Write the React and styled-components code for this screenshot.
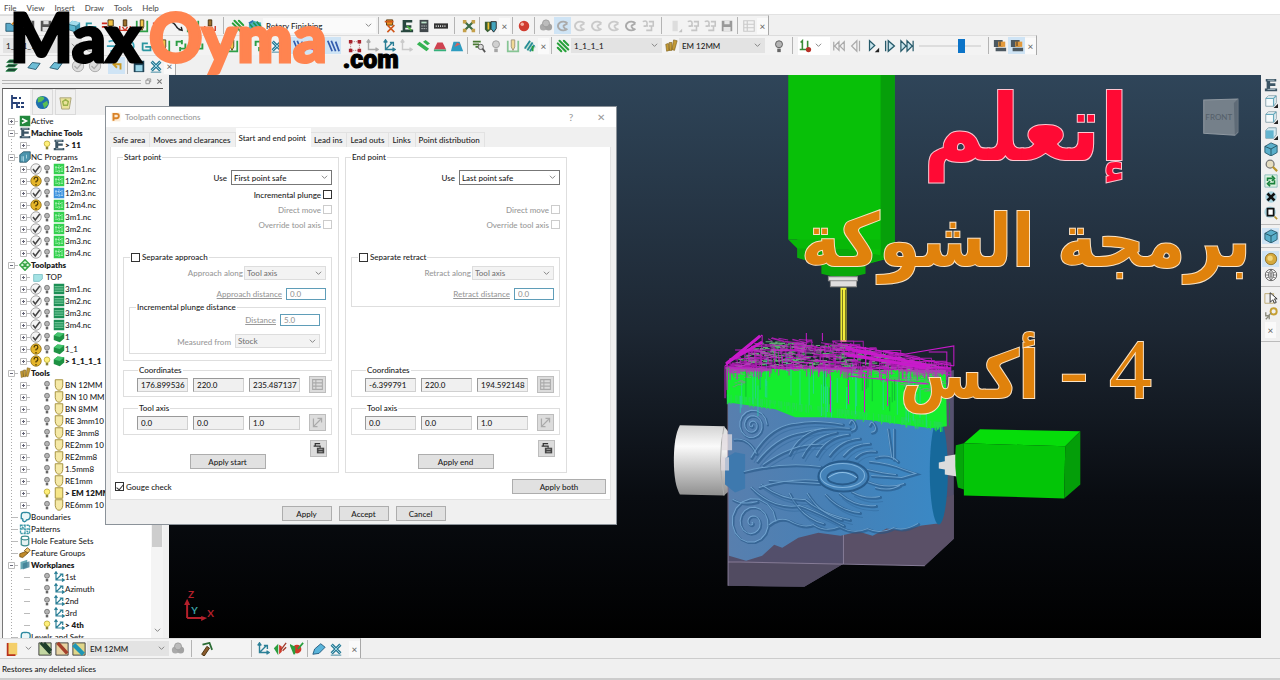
import React, { useState } from "react";
import styled, { createGlobalStyle } from "styled-components";

const GlobalStyle = createGlobalStyle`
  * {
    box-sizing: border-box;
  }
  body {
    margin: 0;
    background: #f0f0f0;
    color: #1c1c1c;
    font-family: Lato, "Open Sans", sans-serif;
    font-size: 8px;
    font-weight: 500;
    line-height: 12px;
  }
  button,
  input,
  select {
    font: inherit;
    color: inherit;
    margin: 0;
    padding: 0;
    border-radius: 0;
  }
`;

const Shell = styled.div`
  position: relative;
  display: flex;
  flex-direction: column;
  height: 100vh;
  overflow: hidden;
`;

const MenuBar = styled.nav`
  display: flex;
  gap: 10px;
  height: 15px;
  padding: 2px 4px;
  background: #fff;
  border-bottom: 1px solid #e2e2e2;
  color: #555;
`;

const MenuLink = styled.a`
  color: inherit;
  text-decoration: none;
`;

const ToolRow = styled.div`
  display: flex;
  height: 20px;
`;

const ToolBar = styled.div`
  display: flex;
  align-items: center;
  padding-left: 3px;
  border-top: 1px solid #dcdcdc;
  border-right: 1px solid #a8a8a8;
  background: #f3f3f3;
`;

const ToolButton = styled.button`
  display: flex;
  align-items: center;
  justify-content: center;
  flex: none;
  width: 17px;
  height: 17px;
  border: none;
  background: ${(p) => (p.$active ? "#cfe4f5" : "transparent")};
  opacity: ${(p) => (p.$faded ? 0.55 : 1)};
`;

const CloseButton = styled.button`
  flex: none;
  width: 11px;
  height: 16px;
  border: none;
  background: #fafafa;
  color: #666;
  font-size: 10px;
  line-height: 12px;
`;

const Divider = styled.span`
  flex: none;
  width: 1px;
  height: 17px;
  margin: 0 ${(p) => (p.$wide ? 5 : 2)}px;
  background: #b4b4b4;
`;

const Space = styled.span`
  flex: none;
  width: 5px;
`;

const ComboBox = styled.span`
  display: grid;
  grid-template-columns: 1fr 14px;
  align-items: center;
  flex: none;
  width: ${(p) => p.$width || 84}px;
  height: ${(p) => p.$height || 15}px;
  background: ${(p) => p.$fill || "#e3e3e3"};
  border: 1px solid ${(p) => p.$line || "transparent"};
  color: ${(p) => (p.$muted ? "#777" : "#222")};

  select {
    grid-area: 1 / 1 / 2 / 3;
    width: 100%;
    height: 100%;
    padding-left: 2px;
    appearance: none;
    border: none;
    background: transparent;
    opacity: 1;
    color: inherit;
    outline: none;
  }
  svg {
    grid-area: 1 / 2 / 2 / 3;
    justify-self: center;
    pointer-events: none;
  }
`;

const Main = styled.main`
  display: flex;
  flex: 1;
  min-height: 0;
`;

const Explorer = styled.aside`
  display: flex;
  flex-direction: column;
  flex: none;
  width: 169px;
  padding: 0 6px 0 2px;
`;

const ExplorerHead = styled.header`
  display: flex;
  align-items: center;
  gap: 4px;
  height: 13px;
  flex: none;
  color: #666;
`;

const Grip = styled.span`
  flex: 1;
  height: 4px;
  border: solid #b5b5b5;
  border-width: 1px 0;
`;

const ExplorerTabs = styled.div`
  display: flex;
  gap: 2px;
  flex: none;
  height: 27px;
  border-top: 1px solid #555;
  border-left: 1px solid #777;
`;

const ExplorerTab = styled.button`
  display: grid;
  place-items: center;
  width: ${(p) => (p.$active ? 27 : 21)}px;
  border: 1px solid ${(p) => (p.$active ? "#fff" : "#dadada")};
  background: ${(p) => (p.$active ? "#fff" : "#f0f0f0")};
`;

const TreeFrame = styled.div`
  display: flex;
  flex: 1;
  min-height: 0;
  overflow: hidden;
  border-left: 1px solid #777;
  background: #fff;
`;

const Tree = styled.ul`
  flex: 1;
  min-width: 0;
  margin: 0;
  padding: 0 0 0 3px;
  list-style: none;
  background: repeating-linear-gradient(#aaa 0 1px, transparent 1px 3px) 8px 6px / 1px 100% no-repeat;
`;

const TreeRow = styled.li`
  display: flex;
  align-items: center;
  height: 12px;
  padding-left: ${(p) => (p.$child ? 12 : 0)}px;
  font-weight: ${(p) => (p.$bold ? 800 : 500)};
  white-space: nowrap;
`;

const Slot = styled.span`
  display: grid;
  place-items: center;
  flex: none;
  width: ${(p) => p.$width || 12}px;
  height: 12px;
`;

const ScrollTrack = styled.div`
  display: flex;
  flex-direction: column;
  align-items: center;
  justify-content: flex-end;
  gap: 80px;
  width: 12px;
  padding-bottom: 4px;
  background: #f4f4f4;
`;

const ScrollThumb = styled.span`
  width: 10px;
  height: 150px;
  background: #cdcdcd;
`;

const Viewport = styled.section`
  position: relative;
  flex: 1;
  min-width: 0;
  background: linear-gradient(#2f4559, #1d2733 45%, #090c11 75%, #000 100%);

  > svg {
    display: block;
    width: 100%;
    height: 100%;
  }
`;

const SideBar = styled.div`
  display: flex;
  flex-direction: column;
  align-items: center;
  flex: none;
  width: 19px;
  padding-top: 2px;

  button {
    height: 16px;
  }
`;

const SideDivider = styled.span`
  width: 100%;
  height: 1px;
  margin: 3px 0;
  background: #bbb;
`;

const StatusBar = styled.footer`
  height: 22px;
  padding: 4px 2px;
  border-top: 1px solid #ccc;
  border-bottom: 2px solid #ccc;
`;

const Brand = styled.div`
  position: absolute;
  top: 9px;
  left: 10px;
  display: flex;
  align-items: baseline;
  font-family: Lato, sans-serif;
  font-weight: 900;
  font-size: 66px;
  line-height: 56px;
  color: #000;
  -webkit-text-stroke: 3px currentColor;
  pointer-events: none;

  em {
    margin-left: 8px;
    font-style: normal;
    color: #ff8450;
  }
  small {
    align-self: flex-end;
    margin-left: 16px;
    font-family: Roboto, sans-serif;
    font-size: 25px;
    line-height: 10px;
    -webkit-text-stroke: 1px currentColor;
  }
`;

const Headline = styled.div`
  position: absolute;
  top: 0;
  right: 10px;
  display: flex;
  flex-direction: column;
  align-items: center;
  width: 450px;
  font-family: "DejaVu Sans Condensed", "DejaVu Sans", sans-serif;
  font-weight: 700;
  font-size: 66px;
  line-height: 140px;
  color: #e0820c;
  -webkit-text-stroke: 2px #fbe3c4;
  paint-order: stroke fill;
  white-space: nowrap;

  strong {
    font-size: 92px;
    line-height: 108px;
    color: #ff0a34;
    -webkit-text-stroke: 2px #ffc6d0;
  }
  em {
    font-style: normal;
    font-size: 73px;
    line-height: 116px;
  }
  b {
    font-family: "Liberation Serif", serif;
    font-weight: 400;
    font-size: 85px;
  }
`;

const Dialog = styled.section`
  position: absolute;
  left: 105px;
  top: 106px;
  width: 512px;
  padding: 0 5px 3px 4px;
  border: 1px solid #8b9299;
  background: #f0f0f0;
`;

const DialogTitle = styled.header`
  display: flex;
  align-items: center;
  gap: 4px;
  height: 20px;
  margin: 0 -5px 1px -4px;
  padding: 0 2px 0 5px;
  background: #fff;
  color: #999;

  h1 {
    flex: 1;
    margin: 0;
    font-size: 8px;
    font-weight: 500;
  }
  button {
    width: 26px;
    border: none;
    background: transparent;
    font-size: 10px;
  }
`;

const TabStrip = styled.div`
  display: flex;
  align-items: flex-end;
  height: 19px;
`;

const Tab = styled.button`
  height: ${(p) => (p.$active ? 19 : 15)}px;
  padding: 0 4px 0 3px;
  border: solid ${(p) => (p.$active ? "#fff" : "#e2e2e2")};
  border-width: 1px 1px 0 0;
  background: ${(p) => (p.$active ? "#fff" : "#f0f0f0")};
  white-space: nowrap;
`;

const Page = styled.div`
  padding: 5px 4px 5px 6px;
  border: 1px solid #e2e2e2;
  border-top: none;
  background: #fff;
`;

const Columns = styled.div`
  display: grid;
  grid-template-columns: 222px 222px;
  gap: 6px;
`;

const Frame = styled.fieldset`
  display: flex;
  flex-direction: column;
  min-width: 0;
  margin: ${(p) => (p.$nested ? 2 : 0)}px 0 0;
  padding: ${(p) => p.$pad || "0 5px"};
  border: 1px solid #dedede;

  legend {
    height: 10px;
    margin-left: ${(p) => (p.$indent ? 1 : 0)}px;
    padding: 0 1px;
    line-height: 10px;
  }
`;

const Field = styled.label`
  display: flex;
  align-items: ${(p) => (p.$end ? "flex-end" : "center")};
  justify-content: flex-end;
  gap: ${(p) => p.$gap || 4}px;
  height: ${(p) => p.$height || 14}px;
  color: ${(p) => (p.$muted ? "#999" : "#1c1c1c")};
`;

const Checks = styled.div`
  display: flex;
  flex-direction: column;
  justify-content: flex-end;
  height: 45px;
  margin: 2px 0 20px;
`;

const CheckBox = styled.input`
  appearance: none;
  display: grid;
  place-items: center;
  width: 9px;
  height: 9px;
  border: 1px solid ${(p) => (p.disabled ? "#ccc" : "#333")};
  background: #fff;

  &:checked::before {
    content: "";
    width: 3px;
    height: 6px;
    border: solid #333;
    border-width: 0 1px 1px 0;
    transform: rotate(40deg);
  }
`;

const CheckLabel = styled.label`
  display: flex;
  align-items: center;
  gap: 2px;
`;

const ValueBox = styled.input`
  width: ${(p) => (p.$short ? 40 : 51)}px;
  height: ${(p) => (p.$short ? 12 : 14)}px;
  padding-left: 3px;
  border: ${(p) => (p.$short ? "1px solid #5f9db8" : "1px solid #999")};
  border-right-color: ${(p) => (p.$short ? "#5f9db8" : "#d0d0d0")};
  border-bottom-color: ${(p) => (p.$short ? "#5f9db8" : "#d0d0d0")};
  background: ${(p) => (p.$short ? "#fff" : "#f0f0f0")};
  outline: none;
`;

const ValueRow = styled.div`
  display: flex;
  align-items: center;
  gap: 5px;
  height: 17px;

  button {
    margin-left: auto;
  }
`;

const SquareButton = styled.button`
  display: grid;
  place-items: center;
  width: 17px;
  height: 17px;
  border: 1px solid #bdbdbd;
  background: #dcdcdc;
`;

const PushButton = styled.button`
  width: ${(p) => p.$width || 50}px;
  height: 15px;
  border: 1px solid #adadad;
  background: #e1e1e1;
  line-height: 12px;
`;

const Lower = styled.div`
  display: flex;
  flex-direction: column;
  gap: 6px;
  margin-top: auto;
  padding-top: 4px;
`;

const ApplyRow = styled.div`
  display: grid;
  grid-template-columns: 1fr auto 1fr;
  align-items: end;
  height: 29px;
  margin: -1px 5px 3px;

  ${SquareButton} {
    justify-self: end;
    align-self: start;
  }
`;

const PageFoot = styled.div`
  display: flex;
  justify-content: space-between;
  align-items: center;
  margin: 6px 0 0 -2px;
`;

const DialogFoot = styled.footer`
  display: flex;
  justify-content: center;
  gap: 7px;
  padding: 6px 0 0 6px;
`;

/* small 16x16 drawings used by the toolbars and the tree */
const glyphs = {
  folder: <><path d="M1 5h5l2 2h7v7H1z" fill="#5aa9c9" stroke="#22566b" /><path d="M8 6l5-4 2 3" fill="none" stroke="#e08a1e" strokeWidth="2" /></>,
  disk: <><path d="M2 2h12v12H2z" fill="#555" /><path d="M5 2h6v4H5zM4 9h8v5H4z" fill="#ddd" /></>,
  diskGrey: <><path d="M2 2h12v12H2z" fill="#999" /><path d="M5 2h6v4H5zM4 9h8v5H4z" fill="#e6e6e6" /></>,
  block: <><path d="M1 6l5-4 9 2v7l-5 4-9-3z" fill="#3b93ae" /><path d="M1 6l5-4 9 2-5 4z" fill="#a3dcec" /><path d="M1 6l9 2v7l-9-3z" fill="#5db5ce" stroke="#1d5566" strokeWidth=".7" /></>,
  axisTeal: <path d="M3 13V5h6M3 13h9V8M6 9h8" fill="none" stroke="#2b96a0" strokeWidth="2" />,
  cutter: <><path d="M8 1h6v7H8z" fill="#f0c040" stroke="#3d2c10" /><path d="M9 8h4l-2 6z" fill="#2b2b2b" /><path d="M1 5h6M1 9h6" stroke="#cf2c20" strokeWidth="2" /></>,
  toolHole: <><path d="M2 2v12h12V2" fill="none" stroke="#2fa048" strokeWidth="2" /><path d="M6 1h4v8l-2 4-2-4z" fill="#f2c64b" stroke="#554010" /></>,
  plunge: <><path d="M6 1h4v7H6z" fill="#9b6e2c" stroke="#402a08" /><path d="M2 8v5h12V8M5 9l3 4 3-4" fill="none" stroke="#cf3a2a" strokeWidth="1.6" /></>,
  curve: <path d="M1 3q5 1 7 5t7 5M11 12l4 1-1-4" fill="none" stroke="#222" strokeWidth="1.6" />,
  hatch: <><path d="M2 7l5-5M2 12L12 2M5 14l9-9M10 14l4-4" stroke="#27a13a" strokeWidth="2.4" transform="matrix(-1 0 0 1 16 0)" strokeLinecap="round" /></>,
  hatchBlue: <><path d="M1 6l5-4 9 2v7l-6 4-8-3z" fill="#4db4bf" /><path d="M2 6l7 8M6 4l7 8M10 3l5 6" stroke="#1f9353" strokeWidth="2" /><path d="M1 5l5-3" stroke="#2d73b0" strokeWidth="2" /></>,
  toolX: <><path d="M4 1h7v6H4z" fill="#e8901e" stroke="#513108" /><path d="M5 7l8 8M13 7l-8 8M2 3h10" stroke="#d0571b" strokeWidth="1.8" /></>,
  machine: <><path d="M3 1h11v3H7v3h6v3H6v2h9v3H1v-2h2z" fill="#27463e" /><path d="M8 8l5 5" stroke="#49b13c" strokeWidth="2" /></>,
  machineGrey: <><path d="M2 1h12v3H7v2h6v3H7v3h8v3H1v-3h2V4H2z" fill="#3c5565" /><path d="M4 13h9M4 2.500h8" stroke="#b6c7cf" /></>,
  calc: <><path d="M3 1h10v14H3z" fill="#41484c" /><path d="M5 3h6v2H5z" fill="#b8dfc7" /><path d="M5 8h6M5 11h6" stroke="#ddd" strokeDasharray="1.5 1" /></>,
  ruler: <><path d="M0 5h16v6H0z" fill="#333" /><path d="M2 8h12" stroke="#eee" strokeWidth="2" strokeDasharray="1 1.5" /></>,
  cross: <><path d="M2 2l12 12M14 2L2 14" stroke="#3a6b45" strokeWidth="2.5" /><path d="M1 1h4v4H1zM11 1h4v4h-4zM1 11h4v4H1zM11 11h4v4h-4z" fill="#c4a04a" /></>,
  bolts: <><path d="M1 3h7v9l-4 3-3-3z" fill="#3a5e33" /><path d="M8 3h6v8l-3 4-3-4z" fill="#43a5bd" stroke="#222" /><path d="M5 4v8" stroke="#edc134" strokeWidth="2" /></>,
  ball: <><circle cx="8" cy="8" r="6" fill="#d03c30" /><circle cx="6" cy="6" r="2" fill="#f5b3a5" /></>,
  blob: <><circle cx="5" cy="9" r="4" fill="#aaa" /><circle cx="11" cy="9" r="4" fill="#a2a2a2" /><circle cx="8" cy="5" r="4" fill="#bcbcbc" stroke="#999" /></>,
  swirl: <path d="M13 5A6 5 0 1 0 13 11M8 8l5-3M8 8l3 4" fill="none" stroke="#aaa" strokeWidth="2.2" />,
  page: <path d="M2 3q5-2 5 2t-4 3h5M9 3h5v5H9M12 8v5H6" fill="none" stroke="#a0a0a0" strokeWidth="1.8" />,
  bar: <><path d="M4 2h6v12H4z" fill="#ccc" /><path d="M15 11v4h-4z" fill="#999" /></>,
  dots: <><path d="M3 3h10v10H3z" fill="none" stroke="#a66" strokeDasharray="1 1" /><path d="M1 1h4v4H1zM11 1h4v4h-4zM1 11h4v4H1zM11 11h4v4h-4z" fill="#a8222c" /></>,
  axis: <><path d="M4 2v10h10M4 12l8-8M2 4l2-3 2 3M12 10l3 2-3 2M9 4h4v4" fill="none" stroke="#2b7f96" strokeWidth="1.6" /></>,
  axisGrey: <path d="M4 2v10h10M2 4l2-3 2 3M12 10l3 2-3 2" fill="none" stroke="#aaa" strokeWidth="1.6" />,
  stripes: <path d="M1 6l3-3 11 8-3 3zM8 3l3-2 5 4-3 2z" fill="#35b352" />,
  redTrap: <><path d="M1 12L5 4h6l4 8z" fill="#cf4351" /><path d="M1 13h14" stroke="#35b07c" strokeWidth="2" /></>,
  blueTrap: <><path d="M1 14L4 3h7l4 11z" fill="#2d9cc0" /><path d="M5 9l3-5 4 2z" fill="#d6605b" /></>,
  search: <><path d="M1 3h9M1 6h7M4 9h4" stroke="#4a7a33" strokeWidth="2" /><circle cx="10" cy="9" r="3" fill="#ddd" stroke="#555" /><path d="M12 11l3 4" stroke="#555" strokeWidth="2" /></>,
  comb: <><path d="M1 9l7-7 7 7-7 6z" fill="#bfe0cf" /><path d="M2 11l6-9M5 13l6-9M8 14l5-7" stroke="#258b97" strokeWidth="2" /><path d="M11 14V8" stroke="#2a9e3d" strokeWidth="2" /></>,
  tools: <><path d="M2 6l3-1 1 8-3 1zM6 4h3v9H6zM11 1l4 1-3 11-3-1z" fill="#c39a35" stroke="#7b5e18" strokeWidth=".7" /></>,
  bulb: <><circle cx="8" cy="6" r="4" fill="#b4b4b4" stroke="#555" /><path d="M6 11h4v4H6z" fill="#666" /></>,
  bulbOn: <><circle cx="8" cy="6" r="4.5" fill="#fff07a" stroke="#a99516" /><path d="M6 11h4v4H6z" fill="#8c8536" /></>,
  down1: <><path d="M3 4l2-2v9M2 12h12M11 2v8" fill="none" stroke="#3a8c35" strokeWidth="1.8" /><circle cx="12" cy="12" r="3" fill="#b83026" /></>,
  first: <path d="M2 3v10M8 3v10L3 8zM14 3v10L9 8z" fill="none" stroke="#aaa" strokeWidth="1.4" />,
  prev: <path d="M9 2v12L3 8zM12 2v12" fill="none" stroke="#aaa" strokeWidth="1.4" />,
  play: <><path d="M4 2v11l6-5.500z" fill="#c9e6ee" stroke="#265a6a" strokeWidth="1.4" /><path d="M15 10v5h-5z" fill="#222" /></>,
  next: <path d="M3 2v12M6 2v12l7-6z" fill="#c9e6ee" stroke="#265a6a" strokeWidth="1.5" />,
  last: <path d="M1 2v12l6-6zM8 2v12l6-6zM15 2v12" fill="#c9e6ee" stroke="#265a6a" strokeWidth="1.4" />,
  simul: <><path d="M1 1h10v8H1zM3 10h12v4H3z" fill="#4c5860" /><path d="M6 3h8v6H6z" fill="#e39a3c" /><path d="M8 3v5" stroke="#222" /></>,
  layers: <><path d="M2 4l3-3h10l-3 3zM1 9l3-3h10l-3 3zM1 14l3-3h10l-3 3z" fill="#193f30" stroke="#2d8c4e" /></>,
  sheet: <path d="M1 10l5-6 9 1-5 7z" fill="#6dbdd6" stroke="#22566b" />,
  round: <><circle cx="8" cy="8" r="6.500" fill="#ddd" stroke="#a5a5a5" /><path d="M4 8l3 3 5-6" fill="none" stroke="#aaa" strokeWidth="1.500" /></>,
  undo: <path d="M5 6h7v6M8 2L4 6l4 4" fill="none" stroke="#c99a25" strokeWidth="2.2" />,
  save: <><path d="M2 2h12v13H2z" fill="#1e4356" /><path d="M4 7h8v7H4z" fill="#9ad5e7" /></>,
  cutX: <><path d="M3 3l10 10M13 3L3 13" fill="none" stroke="#2d7d98" strokeWidth="3.500" /><path d="M3 3l10 10M13 3L3 13" fill="none" stroke="#a8dbe8" /><path d="M2 15h12" stroke="#2d7d98" /></>,
  cyan: <path d="M3 3q7-3 9 3t-7 8M1 8h9" fill="none" stroke="#38a5b9" strokeWidth="2" />,
  recycle: <path d="M3 8V3h6M13 5v6H7M9 1v5M7 14V9" fill="none" stroke="#2d9d45" strokeWidth="2.2" />,
  shell: <><path d="M2 11V6l6-4 6 4v6l-5 2z" fill="#e4d6ee" stroke="#b24bd0" strokeWidth="1.600" /></>,
  slash: <path d="M2 2l5 12M6 2l5 12M11 3l4 11" stroke="#325cae" strokeWidth="2" />,
  gold: <><path d="M3 1h11v14H3z" fill="#f4cf6a" /><path d="M3 1v14h9" fill="none" stroke="#b8321c" strokeWidth="2" /></>,
  stock: <><path d="M1 1h14v14H1z" fill="#c3d7a1" stroke="#333" /><path d="M3 1l11 12M7 1l8 9" stroke="#1e3f2b" strokeWidth="3" /></>,
  stockRed: <><path d="M1 1h14v14H1z" fill="#e7d3a2" stroke="#333" /><path d="M3 1l11 12" stroke="#a4402b" strokeWidth="4" /></>,
  stockBlue: <><path d="M1 1h14v14H1z" fill="#dfd68a" stroke="#333" /><path d="M2 3l11 11" stroke="#1e96b5" strokeWidth="5" /></>,
  hammer: <><path d="M3 14L9 5l3 2-6 9z" fill="#8a5b2c" stroke="#402a08" /><path d="M4 3l8-2 3 8" fill="none" stroke="#2b6c35" strokeWidth="2" /></>,
  drillGreen: <><path d="M1 7l5-5v13z" fill="#2a9e3d" /><path d="M7 3v11l3-3V5z" fill="#cf3828" /><path d="M9 9l6-8M11 10l4-4" stroke="#a03a2a" strokeWidth="1.500" /></>,
  redGreen: <><circle cx="8" cy="8" r="5" fill="#cf3828" /><path d="M1 4l4 2v8zM9 8l6-7" stroke="#2a9e3d" fill="#2a9e3d" strokeWidth="2" /></>,
  eraser: <path d="M1 14l2-6 7-6 5 4-7 7z" fill="#59b4da" stroke="#20577a" />,
  cube: <><path d="M1 5l7-4 7 3v8l-7 4-7-4z" fill="#5aafcb" stroke="#23576a" /><path d="M1 5l7 3 7-4M8 8v8" fill="none" stroke="#20505f" /></>,
  cubeLight: <><path d="M2 5l3-3h9v8l-3 4H2z" fill="#f5fafb" stroke="#809da7" /><path d="M2 5h9v9M11 5l3-3" fill="none" stroke="#68aabd" strokeWidth="1.500" /><path d="M16 11v5h-5z" fill="#222" /></>,
  cubeFront: <><path d="M2 5l3-3h9v8l-3 4H2z" fill="#d3e9f1" stroke="#809da7" /><path d="M2 5h9v9H2z" fill="#64b5d0" /><path d="M16 11v5h-5z" fill="#222" /></>,
  zoom: <><circle cx="7" cy="7" r="4.500" fill="#e6ddc0" stroke="#777" strokeWidth="1.500" /><path d="M10 10l5 5" stroke="#b9952e" strokeWidth="2.500" /></>,
  refresh: <><path d="M1 1h14v14H1z" fill="#dcf2e0" stroke="#8bb" /><path d="M4 8V5h6M12 7v4H6M9 2l3 3-3 3M7 8l-3 3 3 3" fill="none" stroke="#18813b" strokeWidth="1.800" /></>,
  fit: <><circle cx="8" cy="8" r="6.500" fill="#a9d4e0" /><path d="M4 4l8 8M12 4l-8 8" stroke="#111" strokeWidth="3" /></>,
  zoomBox: <><circle cx="7" cy="7" r="6.500" fill="#a9d4e0" /><path d="M4 3h7v8H4z" fill="#fff" stroke="#111" strokeWidth="2" /><path d="M12 12l3 3" stroke="#b9952e" strokeWidth="2" /></>,
  coin: <><circle cx="8" cy="8" r="6.500" fill="#d5a93d" stroke="#8d6f23" /><circle cx="7" cy="7" r="3" fill="#f2d67e" /></>,
  wire: <><circle cx="8" cy="8" r="6.500" fill="#fff" stroke="#555" /><path d="M2 8h12M8 2v12M3 5q5 2 10 0M3 11q5-2 10 0M8 2q-6 6 0 12M8 2q6 6 0 12" fill="none" stroke="#555" strokeWidth=".8" /></>,
  pointer: <><path d="M1 3h10v11H1z" fill="none" stroke="#b9a66a" /><path d="M7 2v11l3-3 2 4 2-1-2-4h3z" fill="#fff" stroke="#222" /></>,
  link: <><circle cx="11" cy="5" r="3.500" fill="none" stroke="#c6a035" strokeWidth="2.200" /><path d="M8 7l-3 3M2 6v4h4v4M2 14l3-3" fill="none" stroke="#8a8a7a" strokeWidth="1.500" /></>,
  tree: <path d="M3 1v14M3 4h5M3 9h5v4h3M9 9h2M12 9h3M12 13h3M10 4h2" fill="none" stroke="#264076" strokeWidth="1.800" />,
  globe: <><circle cx="8" cy="8" r="7" fill="#1e6fae" /><path d="M3 3q6-3 7 1l-3 3-4 1zM8 9l5-3 1 4-4 4z" fill="#5bbf55" /></>,
  bin: <><path d="M2 3h12l-2 12H4z" fill="#e9e29a" stroke="#aaa37a" /><path d="M5 7l3-2 3 2-1 4H6z" fill="none" stroke="#9cb24b" strokeWidth="1.500" /></>,
  activeBox: <><path d="M1 1h14v14H1z" fill="#22883e" /><path d="M4 5l6 3-6 3" fill="none" stroke="#fff" strokeWidth="2" /></>,
  nc: <><path d="M1 1h14v14H1z" fill="#33d04e" /><path d="M4 4v8M8 3v10M12 4v8M3 6h8M5 11h8" stroke="#b9f5c3" strokeWidth="1.200" strokeDasharray="2 1" /></>,
  ncBlue: <><path d="M1 1h14v14H1z" fill="#3c92dd" /><path d="M4 4v8M8 3v10M12 4v8M3 6h8M5 11h8" stroke="#bfe0f8" strokeWidth="1.200" strokeDasharray="2 1" /></>,
  ncRoot: <><path d="M1 5l5-4h9v9l-5 5H1z" fill="#4b94ad" stroke="#245263" /><path d="M4 7v6M6 7v7M10 5v5" stroke="#bfe4ee" /></>,
  diamond: <path d="M8 1l7 7-7 7-7-7zM4.500 4.500l7 7M11.500 4.500l-7 7" fill="#dcf6dc" stroke="#3aa548" strokeWidth="2" />,
  raster: <><path d="M1 1h14v14H1z" fill="#1c8f55" /><path d="M2 5h12M2 8h12M2 11h12" stroke="#a4e6bf" /></>,
  solid: <><path d="M1 6l5-4 9 1v7l-6 5-8-3z" fill="#1d9143" /><path d="M1 6l5-4 9 1-6 5z" fill="#45c46e" /></>,
  ok: <><circle cx="8" cy="8" r="7" fill="#f4f4f4" stroke="#888" /><path d="M4 8l3 4 6-8" fill="none" stroke="#444" strokeWidth="2" /></>,
  ask: <><circle cx="8" cy="8" r="7" fill="#e5b52a" stroke="#8c6b10" /><path d="M5.500 6q0-3 2.500-3t2.500 2.500-2.500 3v1.500M8 12v2" fill="none" stroke="#4c3904" strokeWidth="1.600" /></>,
  topFolder: <path d="M1 4h14v7l-5 4H1z" fill="#a4e2e4" stroke="#5eafb5" />,
  ballnose: <path d="M3 1h10v8q-1 6-5 6t-5-6z" fill="#f5e9a7" stroke="#a6923e" strokeWidth="1.300" />,
  endmill: <path d="M3 1h10v14H3z" fill="#f6e689" stroke="#a6923e" strokeWidth="1.300" />,
  boundary: <path d="M3 6q0-5 5-4 7-1 7 4 0 6-5 6-2 4-5 1 1-3-2-3z" fill="#eaf6f8" stroke="#2d8aa0" strokeWidth="1.800" />,
  pattern: <path d="M2 3h12v11H2zM2 8h12M8 3v11M4 5l8 7" fill="none" stroke="#3f9aa9" strokeWidth="1.800" strokeDasharray="3 1" />,
  holes: <><path d="M3 4v9q5 3 10 0V4" fill="#e6f2f2" stroke="#3a8b8e" strokeWidth="1.600" /><ellipse cx="8" cy="4" rx="5" ry="2.500" fill="#fff" stroke="#3a8b8e" strokeWidth="1.500" /></>,
  feature: <><path d="M1 9l8-3 3 2-7 6-4-1z" fill="#c08a2b" stroke="#6e4b0d" /><path d="M7 5l4-4 4 3-3 4z" fill="#efc56c" stroke="#6e4b0d" /></>,
  planes: <><path d="M2 4l9-3v10l-9 3z" fill="#68a9b5" /><path d="M5 14V6l9-3v8z" fill="#3d7d95" opacity=".8" /></>,
  grid: <path d="M2 2h12v12H2zM2 6h12M2 10h12M6 2v12" fill="none" stroke="#aaa" strokeWidth="1.300" />,
  vector: <path d="M3 13L12 4M8 3h5v5M3 3v10h5" fill="none" stroke="#aaa" strokeWidth="1.500" />,
  padlock: <><path d="M6 7h9v7H6z" fill="#444" /><path d="M10 7V5H4V2h6M2 5h5" fill="none" stroke="#333" strokeWidth="1.500" /><path d="M8 9h5M8 12h5" stroke="#bbb" /></>,
  restore: <path d="M5 5V2h8v7h-3M2 5h8v8H2z" fill="none" stroke="#777" strokeWidth="1.500" />,
  closeMark: <path d="M3 3l10 10M13 3L3 13" stroke="#777" strokeWidth="2.500" />,
};

function Glyph({ name, size = 14 }) {
  return (
    <svg width={size} height={size} viewBox="0 0 16 16" aria-hidden="true">
      {glyphs[name]}
    </svg>
  );
}

function Chevron() {
  return (
    <svg width="7" height="7" viewBox="0 0 8 8" aria-hidden="true">
      <path d="M1 2l3 3 3-3" fill="none" stroke="#777" />
    </svg>
  );
}

function Combo({ label, value, muted, ...rest }) {
  return (
    <ComboBox $muted={muted} {...rest}>
      <select aria-label={label} defaultValue={value} disabled={muted}>
        <option>{value}</option>
      </select>
      <Chevron />
    </ComboBox>
  );
}

// "|" and "||" are separators, "_" a gap, a leading * marks a pressed tool, ~ a greyed one
function Tools({ names }) {
  return names.split(" ").map((entry, i) => {
    if (entry === "|" || entry === "||") return <Divider key={i} $wide={entry === "||"} />;
    if (entry === "_") return <Space key={i} />;
    if (entry === "x") return <CloseButton key={i} aria-label="Close toolbar">×</CloseButton>;
    const name = entry.replace(/[*~]/, "");
    return (
      <ToolButton key={i} aria-label={name} $active={entry[0] === "*"} $faded={entry[0] === "~"}>
        <Glyph name={name} />
      </ToolButton>
    );
  });
}

const Speed = styled.input`
  appearance: none;
  width: 62px;
  height: 14px;
  margin: 0 5px 0 4px;
  background: linear-gradient(#ddd, #ddd) 0 6px / 100% 2px no-repeat;

  &::-webkit-slider-thumb {
    appearance: none;
    width: 7px;
    height: 14px;
    background: #0c74c8;
  }
`;

const StepBox = styled.span`
  display: flex;
  align-items: center;
  gap: 3px;
  width: 32px;
  height: 18px;
  background: #fff;
`;

const ncNames = ["12m1.nc", "12m2.nc", "12m3.nc", "12m4.nc", "3m1.nc", "3m2.nc", "3m3.nc", "3m4.nc"];
const toolNames = ["BN 12MM", "BN 10 MM", "BN 8MM", "RE 3mm10", "RE 3mm8", "RE2mm 10", "RE2mm8", "1.5mm8", "RE1mm"];

const treeRows = [
  { icon: "activeBox", text: "Active", open: "+" },
  { icon: "machineGrey", text: "Machine Tools", open: "-", bold: true },
  { child: true, status: null, bulb: "bulbOn", icon: "machineGrey", text: "> 11", open: "+", bold: true },
  { icon: "ncRoot", text: "NC Programs", open: "-" },
  ...ncNames.map((text, i) => ({
    child: true,
    status: i === 1 || i === 3 ? "ask" : "ok",
    bulb: "bulb",
    icon: i === 2 ? "ncBlue" : "nc",
    text,
    open: "+",
  })),
  { icon: "diamond", text: "Toolpaths", open: "-", bold: true },
  { child: true, folder: true, icon: "topFolder", text: "TOP", open: "+" },
  ...ncNames.slice(4).map((text) => ({ child: true, status: "ok", bulb: "bulb", icon: "raster", text, open: "+" })),
  { child: true, status: "ok", bulb: "bulb", icon: "solid", text: "1", open: "+" },
  { child: true, status: "ask", bulb: "bulb", icon: "solid", text: "1_1", open: "+" },
  { child: true, status: "ask", bulb: "bulbOn", icon: "solid", text: "> 1_1_1_1", open: "+", bold: true },
  { icon: "tools", text: "Tools", open: "-", bold: true },
  ...toolNames.map((text) => ({ child: true, bulb: "bulb", icon: "ballnose", text, open: "+" })),
  { child: true, bulb: "bulbOn", icon: "endmill", text: "> EM 12MM", open: "+", bold: true },
  { child: true, bulb: "bulb", icon: "ballnose", text: "RE6mm 10", open: "+" },
  { icon: "boundary", text: "Boundaries" },
  { icon: "pattern", text: "Patterns" },
  { icon: "holes", text: "Hole Feature Sets" },
  { icon: "feature", text: "Feature Groups" },
  { icon: "planes", text: "Workplanes", open: "-", bold: true },
  ...["1st", "Azimuth", "2nd", "3rd"].map((text) => ({ child: true, bulb: "bulb", icon: "axis", text })),
  { child: true, bulb: "bulbOn", icon: "axis", text: "> 4th", bold: true },
  { icon: "boundary", text: "Levels and Sets" },
];

function Expander({ open }) {
  return (
    <svg width="11" height="11" viewBox="0 0 11 11" aria-hidden="true">
      <path d="M5 5.500h6" stroke="#bbb" />
      {open && <path d="M1.500 2.500h6v6h-6z" fill="#fff" stroke="#bbb" />}
      {open && <path d={open === "+" ? "M3 5.500h3M4.500 4v3" : "M3 5.500h3"} stroke="#667" />}
    </svg>
  );
}

function ExplorerTree() {
  return (
    <TreeFrame>
      <Tree>
        {treeRows.map((row, i) => (
          <TreeRow key={i} $child={row.child} $bold={row.bold}>
            <Slot>
              <Expander open={row.open} />
            </Slot>
            {row.child && !row.folder && (
              <>
                <Slot>{row.status && <Glyph name={row.status} size={12} />}</Slot>
                <Slot $width={10}>
                  <Glyph name={row.bulb} size={10} />
                </Slot>
              </>
            )}
            <Slot $width={row.folder ? 16 : 13}>
              <Glyph name={row.icon} size={row.folder ? 10 : 12} />
            </Slot>
            {row.text}
          </TreeRow>
        ))}
      </Tree>
      <ScrollTrack>
        <ScrollThumb />
        <Chevron />
      </ScrollTrack>
    </TreeFrame>
  );
}

// repeatable noise for the toolpath and the carved relief
function makeNoise(seed) {
  let s = seed;
  return () => {
    s = (s * 16807) % 2147483647;
    return s / 2147483647;
  };
}

const noise = makeNoise(77);
const topEdge = (x) => (x < 762 ? 366 - (x - 725) * 0.8 : x < 845 ? 337 + (x - 762) * 0.05 : 342 + (x - 845) * 0.22);
const bottomEdge = (x) => 402 + (x - 726) * 0.13;

const linkLines = Array.from({ length: 330 }, () => {
  const x = 726 + noise() * 215;
  const top = topEdge(x) + noise() * Math.min(30, 372 - topEdge(x));
  const w = Math.min(950 - x, 3 + noise() * 20);
  const h = 2 + noise() * 10;
  return noise() > 0.5
    ? `M${x.toFixed(1)} ${(top + h).toFixed(1)}v-${h.toFixed(1)}h${w.toFixed(1)}v${h.toFixed(1)}`
    : `M${x.toFixed(1)} ${top.toFixed(1)}l${w.toFixed(1)} ${(h / 3).toFixed(1)}`;
}).join("");

const cutLines = (count, min, max) =>
  Array.from({ length: count }, () => {
    const x = 727 + noise() * 222;
    const y = topEdge(x) + 14 + noise() * 34;
    return `M${x.toFixed(1)} ${y.toFixed(1)}v${(min + noise() * (max - min)).toFixed(1)}`;
  }).join("");

const greenFlecks = Array.from({ length: 700 }, () => {
  const x = 732 + noise() * 208;
  return `M${x.toFixed(1)} ${(topEdge(x) + 4 + noise() * 28).toFixed(1)}h${(2 + noise() * 5).toFixed(1)}`;
}).join("");

const ragged = Array.from({ length: 170 }, () => {
  const x = 727 + noise() * 215;
  return `M${x.toFixed(1)} ${(bottomEdge(x) - 8).toFixed(1)}v${(3 + noise() * 7).toFixed(1)}`;
}).join("");

const tealLines = cutLines(34, 16, 40);
const darkCuts = cutLines(16, 14, 26);

function spiral(cx, cy, r) {
  let d = "";
  for (let a = 0; a < 19; a += 0.4) {
    const k = (r * a) / 19;
    d += `${d ? "L" : "M"}${(cx + Math.cos(a) * k).toFixed(1)} ${(cy + Math.sin(a) * k * 1.1).toFixed(1)}`;
  }
  return d;
}

const feathers = [
  "M752 458q18-32 45-34 18-4 46 1",
  "M758 462q20-26 46-29 22-6 46-4",
  "M764 465q30-22 60-20",
  "M790 455q10-22 34-26",
  "M803 457q10-20 34-24",
  "M817 456q10-19 32-21",
  "M830 456q12-16 30-17",
  "M844 456q10-12 26-12",
  "M856 458q8-8 20-6",
  "M752 488q22 22 48 18 18 6 44 20",
  "M762 485q22 16 44 15 16 14 44 20",
  "M790 494q12 24 34 30",
  "M808 494q12 20 34 26",
  "M826 495q14 16 34 18",
  "M840 494q16 14 36 12",
  "M852 492q14 8 28 5",
  "M745 472q40-10 76-5",
  "M760 488q30-10 60-7",
  "M770 481l50 3",
  "M870 462q20 2 34 8l12 4-14 4-30-2",
  "M868 470q16 4 28 5M868 482q20 8 36 2M876 488q14 4 24-2M876 458q14-4 22 4",
  "M735 440q14-2 22 14M734 500q10 6 24 2M770 525q10-8 20-4 14 8 24 4 12 8 26 2 14 8 28 2 12 6 26-1 10 4 24-4",
  "M850 424q2-6 5 0t-3 7M870 426q2-6 5 0t-3 7M888 430l4 28M894 430v30",
];

function Scene() {
  return (
    <svg viewBox="169 76 1092 561" preserveAspectRatio="xMidYMid slice" role="img" aria-label="Machine simulation">
      <defs>
        <linearGradient id="chuck" x1="0" x2="0" y1="0" y2="1">
          <stop offset="0" stopColor="#d2d2d2" />
          <stop offset=".3" stopColor="#fafafa" />
          <stop offset="1" stopColor="#8f8f8f" />
        </linearGradient>
        <linearGradient id="part" x1="0" x2="1" y1="0" y2="0">
          <stop offset="0" stopColor="#587fae" />
          <stop offset=".5" stopColor="#4680b6" />
          <stop offset="1" stopColor="#3989c6" />
        </linearGradient>
      </defs>

      {/* spindle */}
      <path d="M788 76h106v166l-4 16-22 6-46 1-25-7v-18h-9z" fill="#08c008" />
      <path d="M880 76h14v166l-4 16-10 2z" fill="#069f0a" />
      <path d="M797 240l1 18 23 8v8q22 7 44 0v-9l22-8" fill="#09a80b" />
      <path d="M788 240h92v10l-83-1z" fill="#08b808" />
      <path d="M828 277h29v4h-1v6h-26v-6h-2z" fill="#e0dede" stroke="#8d8d8d" strokeWidth="1" />
      <path d="M829 281h27" stroke="#8d8d8d" />
      <path d="M840 288h6v54h-6z" fill="#f4ef3c" />
      <path d="M842 290v50M845 290v50" stroke="#77751d" />

      {/* chuck */}
      <path d="M680 425l44 1 8 10v52l-8 7-44-1q-6-10-6-34t6-35z" fill="url(#chuck)" />
      <path d="M724 426q-7 34 0 69" fill="none" stroke="#aaa" />

      {/* stock */}
      <path d="M728 400h114l111-30v168l-29 27-81-2-39 23-76-1z" fill="#615c7d" opacity=".85" />
      <path d="M728 561l115 2-39 23-76-1z" fill="#514b61" />
      <path d="M843 534l110-40v44l-29 27-81-2z" fill="#5a5067" />
      <path d="M728 561l196 4M843 563v-32M728 400v185" stroke="#857b96" fill="none" />

      {/* carved part */}
      <path d="M728 400l120 10 92 12q8 48-3 101l-16 2-20 5-15-2-14 7-14-4-18 4-22-3-20 5-16 10-8-3-12 11-16 5-17-5z" fill="url(#part)" />
      <ellipse cx="938" cy="471" rx="9" ry="53" fill="#17699b" />
      <path d="M725 458l10-6 10 2v34l-10 4-10-8z" fill="#3e79ae" />
      <path d="M721 457h8v13h-8zM722 434h10v16h-10z" fill="#e0d9df" opacity=".75" />
      <g fill="none" strokeLinecap="round">
        <g stroke="#265685" strokeWidth="3" opacity=".6">
          {feathers.map((d) => <path key={d} d={d} />)}
          <path d={spiral(753, 426, 15)} strokeWidth="2" />
          <path d={spiral(753, 523, 24)} strokeWidth="2" />
        </g>
        <g stroke="#7fb2dc" strokeWidth="1" opacity=".75" transform="translate(-1 -1)">
          {feathers.map((d) => <path key={d} d={d} />)}
          <path d={spiral(753, 426, 15)} />
          <path d={spiral(753, 523, 24)} />
        </g>
        <g stroke="#2f6598" opacity=".45" transform="translate(2 4)">
          {feathers.slice(0, 16).map((d) => <path key={d} d={d} />)}
        </g>
        <ellipse cx="843" cy="476" rx="25" ry="15" fill="#4482b8" stroke="#285b8b" strokeWidth="2" />
        <ellipse cx="842" cy="475" rx="22" ry="12" stroke="#7fb2dc" />
        <ellipse cx="842" cy="477" rx="15" ry="7" stroke="#285b8b" strokeWidth="2" />
        <path d="M828 477q14-10 28 0" stroke="#8fc0e6" />
      </g>

      {/* toolpath */}
      <path d="M726 367l60 2 30-2 50 3 79 0 1 56-16 2-60-8-45-3-30 0-20-8-48-7z" fill="#14ed2e" />
      <path d={ragged} stroke="#22dd4c" strokeWidth="1" />
      <path d={greenFlecks} stroke="#5faa72" strokeWidth="1" />
      <path d={tealLines} stroke="#27cfae" strokeWidth="1" opacity=".7" />
      <path d={darkCuts} stroke="#0d9d35" strokeWidth="1" opacity=".6" />
      <g fill="none" stroke="#c81acb">
        <path d={linkLines} strokeWidth="1" opacity=".8" />
        <path d="M725 398v-32l37-31M727 390v-28l32-24M730 380v-22M845 344l108 22M845 350l100 18M845 356l80 10M845 346l60 8 48-8v20M762 335v8M806 333v8M822 333v8M865 347v18M928 352h18v16M725 368h225M735 350h110M848 376l80 8M848 380v24M864 372v40M887 378v28M830 376v36" />
        <path d="M726 364l34-28M728 362l34-20M845 348l85 18M845 354l80 14" strokeWidth="3" />
      </g>

      {/* tailstock */}
      <path d="M938 462l6-1v-5l12-2v22l-12-2v-5l-6-1z" fill="#dcdcdc" />
      <path d="M955 445l8-2v46l-6-2q-4-20-2-42z" fill="#04a60a" />
      <path d="M963 443l16-14 100 2-15 15z" fill="#06dd0a" />
      <path d="M963 443l101 3-1 52-100-3z" fill="#03c507" />
      <path d="M1064 446l15-15v53l-16 14z" fill="#049e09" />

      {/* view cube */}
      <path d="M1202 101l34-1v33l-3 3-31-2z" fill="#75808a" stroke="#8f98a1" />
      <path d="M1232 104l4-4v33l-3 3z" fill="#5f6b77" />
      <text x="1217" y="121" fontSize="8" fill="#56616b" textAnchor="middle">FRONT</text>

      {/* axes */}
      <path d="M189 617v-16M189 617h17" stroke="#b4202b" strokeWidth="2" />
      <path d="M186 604l3-6 3 6zM203 615l6 2-6 3z" fill="#b4202b" />
      <g fontSize="10" fontWeight="700">
        <text x="190" y="597" fill="#b4202b">Z</text>
        <text x="209" y="616" fill="#b4202b">X</text>
        <text x="193" y="613" fill="#3aa0a5">Y</text>
      </g>
    </svg>
  );
}

function ValueGroup({ title, values, icon }) {
  return (
    <Frame $indent $pad="1px 5px 3px 13px">
      <legend>{title}</legend>
      <ValueRow>
        {values.map((value, i) => (
          <ValueBox key={i} aria-label={`${title} ${"XYZ"[i]}`} defaultValue={value} />
        ))}
        <SquareButton aria-label={title + " picker"}>
          <Glyph name={icon} size={13} />
        </SquareButton>
      </ValueRow>
    </Frame>
  );
}

function PointPanel({ title, point, verb, coordinates, plunge, apply }) {
  return (
    <Frame $pad="8px 6px 0 5px">
      <legend>{title}</legend>
      <Field $height={15}>
        Use
        <Combo value={point} $width={101} $fill="#fff" $line="#777" />
      </Field>
      <Checks>
        {plunge && (
          <Field $height={15} $gap={2}>
            Incremental plunge <CheckBox type="checkbox" />
          </Field>
        )}
        <Field $height={15} $gap={2} $muted>
          Direct move <CheckBox type="checkbox" disabled />
        </Field>
        <Field $height={15} $gap={2} $muted>
          Override tool axis <CheckBox type="checkbox" disabled />
        </Field>
      </Checks>
      <Frame $indent $pad="4px 5px 6px">
        <legend>
          <CheckLabel>
            <CheckBox type="checkbox" /> Separate {verb.toLowerCase()}
          </CheckLabel>
        </legend>
        <Field $muted $gap={1}>
          {verb} along
          <Combo value="Tool axis" muted $width={82} $height={14} $fill="#f3f3f3" $line="#ddd" />
        </Field>
        <Field $muted $end $height={20}>
          <u>{verb} distance</u>
          <ValueBox $short defaultValue="0.0" />
        </Field>
        {plunge && (
          <Frame $indent $nested $pad="2px 5px 5px">
            <legend>Incremental plunge distance</legend>
            <Field $muted $height={12}>
              <u>Distance</u>
              <ValueBox $short defaultValue="5.0" />
            </Field>
            <Field $muted $end $height={22}>
              Measured from
              <Combo value="Stock" muted $width={85} $height={14} $fill="#f3f3f3" $line="#ddd" />
            </Field>
          </Frame>
        )}
      </Frame>
      <Lower>
        <ValueGroup title="Coordinates" values={coordinates} icon="grid" />
        <ValueGroup title="Tool axis" values={["0.0", "0.0", "1.0"]} icon="vector" />
        <ApplyRow>
          <span />
          <PushButton $width={76}>{apply}</PushButton>
          <SquareButton aria-label="Unlock">
            <Glyph name="padlock" size={13} />
          </SquareButton>
        </ApplyRow>
      </Lower>
    </Frame>
  );
}

const tabNames = ["Safe area", "Moves and clearances", "Start and end point", "Lead ins", "Lead outs", "Links", "Point distribution"];

function ConnectionsDialog() {
  const [tab, setTab] = useState("Start and end point");

  return (
    <Dialog role="dialog" aria-label="Toolpath connections">
      <DialogTitle>
        <svg width="10" height="10" viewBox="0 0 16 16" aria-hidden="true">
          <path d="M1 1h14v14H1z" fill="#fdebd5" />
          <path d="M4 14V3h5a3.500 3.500 0 0 1 0 7H5" fill="none" stroke="#d98227" strokeWidth="3" />
        </svg>
        <h1>Toolpath connections</h1>
        <button aria-label="Help">?</button>
        <button aria-label="Close">✕</button>
      </DialogTitle>
      <TabStrip role="tablist">
        {tabNames.map((name) => (
          <Tab key={name} role="tab" $active={name === tab} onClick={() => setTab(name)}>
            {name}
          </Tab>
        ))}
      </TabStrip>
      <Page>
        <Columns>
          <PointPanel
            title="Start point"
            point="First point safe"
            verb="Approach"
            coordinates={["176.899536", "220.0", "235.487137"]}
            plunge
            apply="Apply start"
          />
          <PointPanel
            title="End point"
            point="Last point safe"
            verb="Retract"
            coordinates={["-6.399791", "220.0", "194.592148"]}
            apply="Apply end"
          />
        </Columns>
        <PageFoot>
          <CheckLabel>
            <CheckBox type="checkbox" defaultChecked /> Gouge check
          </CheckLabel>
          <PushButton $width={94}>Apply both</PushButton>
        </PageFoot>
      </Page>
      <DialogFoot>
        <PushButton>Apply</PushButton>
        <PushButton>Accept</PushButton>
        <PushButton>Cancel</PushButton>
      </DialogFoot>
    </Dialog>
  );
}

export default function App() {
  return (
    <Shell>
      <GlobalStyle />
      <MenuBar>
        {["File", "View", "Insert", "Draw", "Tools", "Help"].map((item) => (
          <MenuLink key={item} href="#">{item}</MenuLink>
        ))}
      </MenuBar>
      <ToolRow>
        <ToolBar>
          <Tools names="folder disk disk || block axisTeal cutter plunge toolHole cutter curve toolHole plunge || hatch hatchBlue" />
          <Combo label="Strategy" value="Rotary Finishing" $width={113} $fill="#fafafa" />
          <Tools names="| toolX machine calc ruler || cross | bolts x | ball | blob *swirl ~swirl ~swirl ~swirl swirl ~page || ~bar ~page ~page diskGrey | ~grid x" />
        </ToolBar>
      </ToolRow>
      <ToolRow>
        <ToolBar>
          <Combo label="Program" value="1_1_1_1" $width={79} />
          <Tools names="round | cyan cyan axisTeal toolHole recycle recycle recycle toolHole || recycle cutX | *slash *shell *slash _ dots axisGrey axis ~axisGrey stripes redTrap blueTrap | search ~bulb ~toolHole comb x | hatch" />
          <Combo label="Toolpath" value="1_1_1_1" $width={91} />
          <Tools names="tools" />
          <Combo label="Tool" value="EM 12MM" $width={86} />
          <Tools names="_ bulb ||" />
          <StepBox>
            <Glyph name="down1" />
            <Chevron />
          </StepBox>
          <Tools names="first prev play next last" />
          <Speed type="range" aria-label="Speed" defaultValue="70" />
          <Tools names="| simul *simul x" />
        </ToolBar>
      </ToolRow>
      <ToolRow>
        <ToolBar>
          <Tools names="layers _ sheet _ sheet _ round round _ *undo | save cutX x" />
        </ToolBar>
      </ToolRow>

      <Main>
        <Explorer>
          <ExplorerHead>
            <Grip />
            <Glyph name="restore" size={7} />
            <Glyph name="closeMark" size={7} />
          </ExplorerHead>
          <ExplorerTabs>
            <ExplorerTab $active aria-label="Explorer"><Glyph name="tree" size={16} /></ExplorerTab>
            <ExplorerTab aria-label="Web"><Glyph name="globe" size={15} /></ExplorerTab>
            <ExplorerTab aria-label="Recycle bin"><Glyph name="bin" size={15} /></ExplorerTab>
          </ExplorerTabs>
          <ExplorerTree />
        </Explorer>
        <Viewport>
          <Scene />
          <Headline dir="rtl" lang="ar">
            <strong>إتعلم</strong>
            <em>برمجة الشوكة</em>
            <span><b>4 -</b> أكس</span>
          </Headline>
        </Viewport>
        <SideBar>
          <Tools names="machineGrey cubeLight cubeLight cubeFront cube zoom refresh fit zoomBox" />
          <SideDivider />
          <Tools names="*cube" />
          <SideDivider />
          <Tools names="*coin wire" />
          <SideDivider />
          <Tools names="pointer link x" />
          <SideDivider />
        </SideBar>
      </Main>

      <ToolRow>
        <ToolBar>
          <Tools names="gold" />
          <Slot $width={16}><Chevron /></Slot>
          <Tools names="stock stockRed stockBlue" />
          <Combo label="Active tool" value="EM 12MM" $width={82} />
          <Tools names="blob || hammer _ _ _ _ _ _ _ | axis drillGreen redGreen | eraser cutX _ x" />
        </ToolBar>
      </ToolRow>
      <StatusBar>Restores any deleted slices</StatusBar>

      <Brand>
        <span>Max</span>
        <em>Oyma</em>
        <small>.com</small>
      </Brand>
      <ConnectionsDialog />
    </Shell>
  );
}
